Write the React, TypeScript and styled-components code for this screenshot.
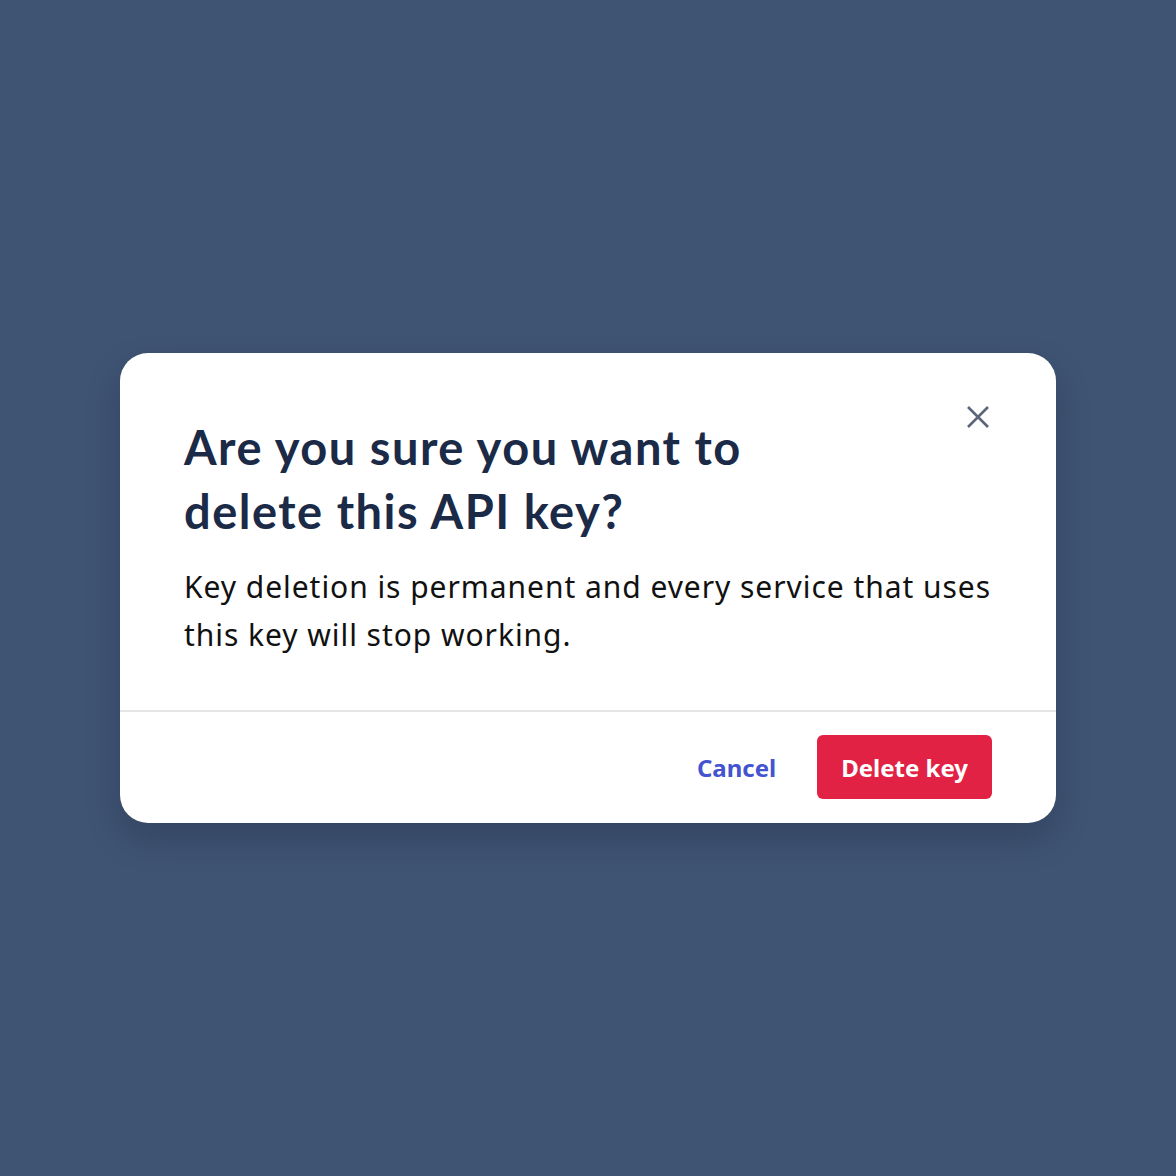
import React from 'react'
import styled, { createGlobalStyle } from 'styled-components'

const GlobalStyle = createGlobalStyle`
    html, body {
        margin: 0;
        padding: 0;
        background: #3f5373;
    }
`

const Page = styled.div`
    width: 1176px;
    height: 1176px;
    display: flex;
    align-items: center;
    justify-content: center;
    background: #3f5373;
`

const Dialog = styled.div`
    width: 936px;
    background: #ffffff;
    border-radius: 28px;
    box-shadow: 0 16px 32px rgba(20, 30, 50, 0.25);
    position: relative;
`

const Body = styled.div`
    padding: 62px 64px 51px 64px;
`

const Title = styled.h2`
    margin: 0 0 20px 0;
    width: 620px;
    font-family: Lato, "Noto Sans", sans-serif;
    font-weight: 700;
    font-size: 47px;
    letter-spacing: 1.5px;
    line-height: 64px;
    color: #1b2a47;
`

const Message = styled.p`
    margin: 0;
    font-family: "Noto Sans", "Open Sans", sans-serif;
    font-size: 30px;
    letter-spacing: 0.95px;
    line-height: 48px;
    color: #111111;
`

const CloseButton = styled.button`
    position: absolute;
    top: 46px;
    right: 60px;
    width: 36px;
    height: 36px;
    padding: 0;
    border: none;
    background: transparent;
    display: flex;
    align-items: center;
    justify-content: center;
    cursor: pointer;
`

const Footer = styled.div`
    border-top: 2px solid #e6e6e6;
    padding: 23px 64px 24px 64px;
    display: flex;
    justify-content: flex-end;
    align-items: center;
    gap: 17px;
`

const Button = styled.button<{ danger?: boolean }>`
    height: 64px;
    padding: 0 24px;
    border: none;
    border-radius: 6px;
    font-family: "Noto Sans", "Open Sans", sans-serif;
    font-weight: 700;
    font-size: 24px;
    cursor: pointer;
    background: ${({ danger }) => (danger ? '#e12245' : 'transparent')};
    color: ${({ danger }) => (danger ? '#ffffff' : '#4453cf')};
`

const App: React.FunctionComponent = () => {
    return (
        <>
            <GlobalStyle />
            <Page>
                <Dialog>
                    <CloseButton aria-label="Close">
                        <svg width="24" height="24" viewBox="0 0 24 24" fill="none">
                            <path d="M2 2 L22 22 M22 2 L2 22" stroke="#5b6679" strokeWidth="2.6" />
                        </svg>
                    </CloseButton>
                    <Body>
                        <Title>Are you sure you want to delete this API key?</Title>
                        <Message>
                            Key deletion is permanent and every service that uses this key will stop working.
                        </Message>
                    </Body>
                    <Footer>
                        <Button>Cancel</Button>
                        <Button danger>Delete key</Button>
                    </Footer>
                </Dialog>
            </Page>
        </>
    )
}

export default App
